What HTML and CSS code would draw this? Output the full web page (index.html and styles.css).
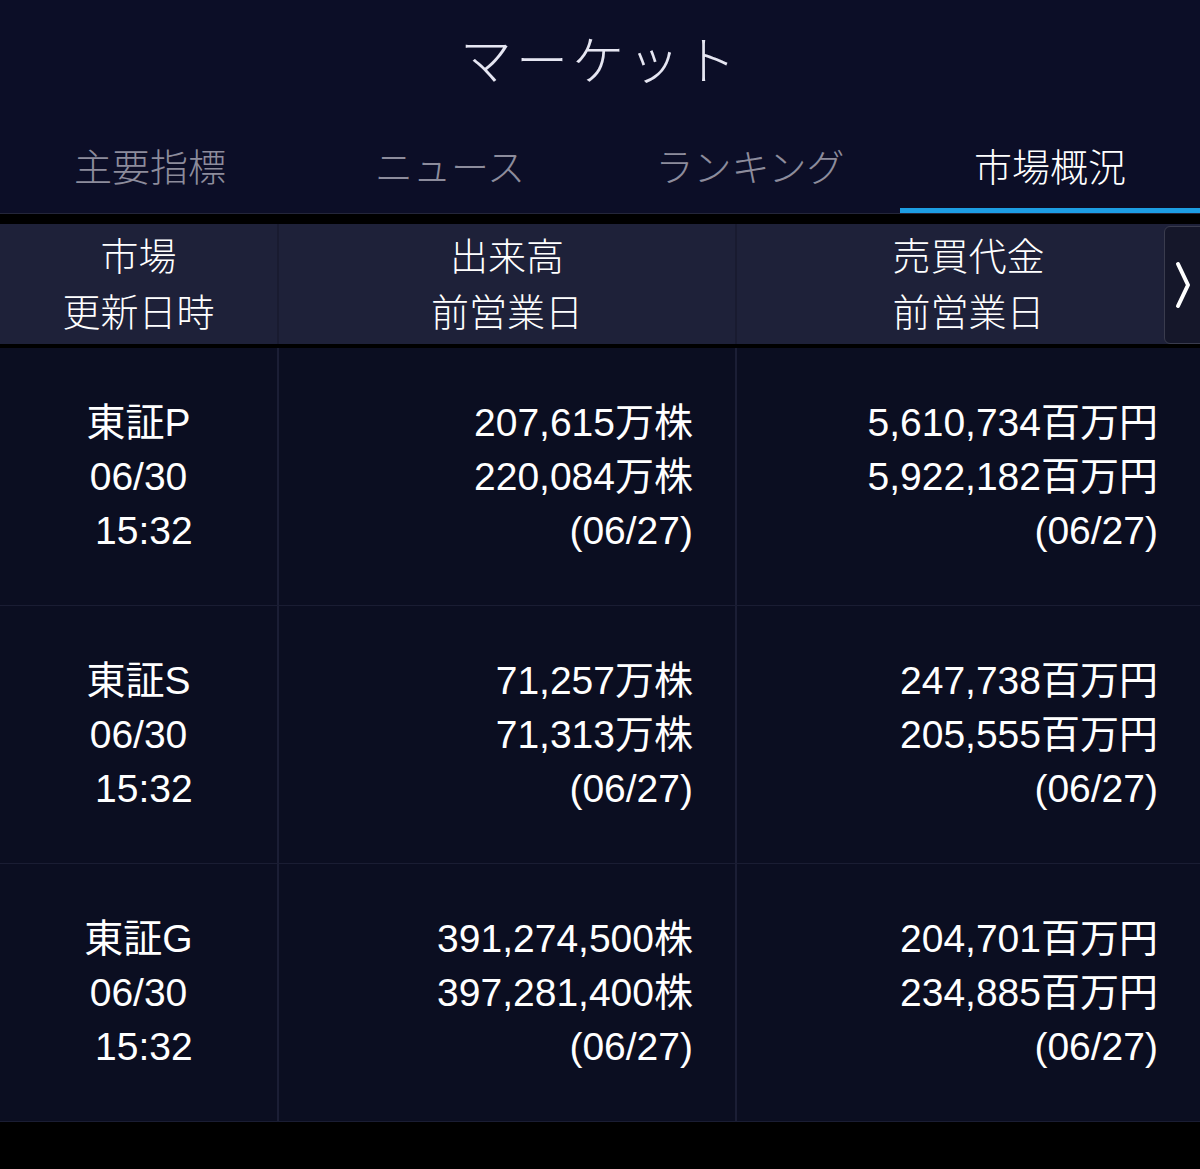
FILE: index.html
```html
<!DOCTYPE html>
<html lang="ja">
<head>
  <meta charset="UTF-8" />
  <meta name="viewport" content="width=device-width, initial-scale=1.0"/>
  <title>マーケット</title>
  <link rel="stylesheet" href="styles.css">
</head>
<body>
  <header class="topbar">
    <h1 class="title">マーケット</h1>
  </header>

  <nav class="tabs">
    <div class="tab">主要指標</div>
    <div class="tab">ニュース</div>
    <div class="tab">ランキング</div>
    <div class="tab active">市場概況</div>
  </nav>

  <div class="table">
    <div class="row head">
      <div class="cell market">市場<br>更新日時</div>
      <div class="cell center">出来高<br>前営業日</div>
      <div class="cell center">売買代金<br>前営業日</div>
      <button class="next-btn" aria-label="次へ">
        <svg width="18" height="50" viewBox="0 0 18 50">
          <path d="M4 4 L14 25 L4 46" fill="none" stroke="#fff" stroke-width="4" stroke-linecap="round" stroke-linejoin="round"/>
        </svg>
      </button>
    </div>

    <div class="row">
      <div class="cell market">東証P<br>06/30<br>&nbsp;15:32</div>
      <div class="cell num">207,615万株<br>220,084万株<br>(06/27)</div>
      <div class="cell num">5,610,734百万円<br>5,922,182百万円<br>(06/27)</div>
    </div>

    <div class="row">
      <div class="cell market">東証S<br>06/30<br>&nbsp;15:32</div>
      <div class="cell num">71,257万株<br>71,313万株<br>(06/27)</div>
      <div class="cell num">247,738百万円<br>205,555百万円<br>(06/27)</div>
    </div>

    <div class="row">
      <div class="cell market">東証G<br>06/30<br>&nbsp;15:32</div>
      <div class="cell num">391,274,500株<br>397,281,400株<br>(06/27)</div>
      <div class="cell num">204,701百万円<br>234,885百万円<br>(06/27)</div>
    </div>
  </div>
</body>
</html>
```

FILE: styles.css
```css
body {
  margin: 0;
  background-color: #000;
  color: #fff;
  font-family: "Liberation Sans", "Noto Sans CJK JP", sans-serif;
}

.topbar {
  height: 120px;
  background-color: #0c0e27;
  display: flex;
  align-items: center;
  justify-content: center;
}

.title {
  margin: 0 0 6px;
  font-family: "Noto Sans CJK JP", sans-serif;
  font-size: 52px;
  font-weight: 300;
  letter-spacing: 4px;
  color: #e6e6f2;
}

.tabs {
  display: flex;
  height: 93px;
  background-color: #0c0e27;
  border-bottom: 1px solid #24263a;
}

.tab {
  flex: 1;
  display: flex;
  align-items: center;
  justify-content: center;
  font-family: "Noto Sans CJK JP", sans-serif;
  font-size: 38px;
  font-weight: 300;
  color: #8d8c9c;
  border-bottom: 5px solid transparent;
}

.tab.active {
  color: #fff;
  border-bottom-color: #1d9ee3;
}

.table {
  margin-top: 10px;
}

.row {
  display: grid;
  grid-template-columns: 277px 458px 465px;
  height: 257px;
  background-color: #0b0e21;
  border-bottom: 1px solid #1a1d33;
}

.row.head {
  position: relative;
  height: 120px;
  background-color: #1e2139;
  border-bottom: 4px solid #000;
  font-family: "Noto Sans CJK JP", sans-serif;
  font-weight: 300;
}

.cell {
  display: flex;
  align-items: center;
  font-size: 39px;
  line-height: 54px;
  border-left: 2px solid #1b1e35;
}

.cell:first-child {
  border-left: none;
}

.row.head .cell {
  font-size: 38px;
  line-height: 56px;
  padding-bottom: 4px;
  border-left-color: #191b30;
}

.market {
  justify-content: center;
  text-align: center;
}

.center {
  justify-content: center;
  text-align: center;
}

.num {
  justify-content: flex-end;
  text-align: right;
  padding-right: 42px;
}

.next-btn {
  position: absolute;
  right: -6px;
  top: 2px;
  width: 42px;
  height: 118px;
  padding: 0 4px 0 0;
  background-color: #15172a;
  border: 1px solid #3a3c4e;
  border-radius: 6px;
  display: flex;
  align-items: center;
  justify-content: center;
}
```
